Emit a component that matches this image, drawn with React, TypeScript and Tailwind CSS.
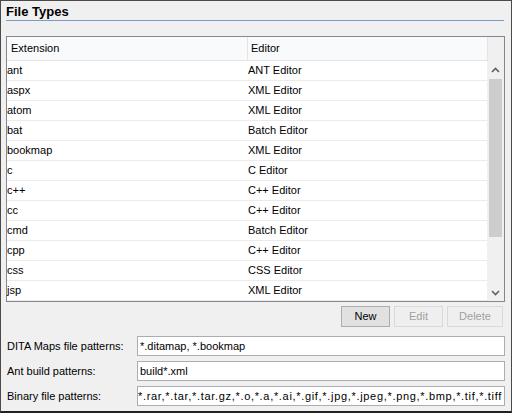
import React from 'react';

const rows: [string, string][] = [
  ['ant', 'ANT Editor'],
  ['aspx', 'XML Editor'],
  ['atom', 'XML Editor'],
  ['bat', 'Batch Editor'],
  ['bookmap', 'XML Editor'],
  ['c', 'C Editor'],
  ['c++', 'C++ Editor'],
  ['cc', 'C++ Editor'],
  ['cmd', 'Batch Editor'],
  ['cpp', 'C++ Editor'],
  ['css', 'CSS Editor'],
  ['jsp', 'XML Editor'],
];

const fields: [string, string][] = [
  ['DITA Maps file patterns:', '*.ditamap, *.bookmap'],
  ['Ant build patterns:', 'build*.xml'],
  ['Binary file patterns:', '*.rar,*.tar,*.tar.gz,*.o,*.a,*.ai,*.gif,*.jpg,*.jpeg,*.png,*.bmp,*.tif,*.tiff'],
];

const Chevron = ({ up }: { up?: boolean }) => (
  <svg width="9" height="6" viewBox="0 0 9 6" className="block">
    <path
      d={up ? 'M1 5 L4.5 1.5 L8 5' : 'M1 1 L4.5 4.5 L8 1'}
      fill="none"
      stroke="#606060"
      strokeWidth="1.6"
    />
  </svg>
);

export default function App() {
  return (
    <div
      className="w-[512px] h-[413px] bg-[#f0f0f0] border border-[#4a4a4a] border-b-2 border-b-[#222] text-[11px] text-black overflow-hidden"
      style={{ fontFamily: '"Liberation Sans", Arial, sans-serif' }}
    >
      {/* section title */}
      <div className="pl-[5px] pr-[7px] pt-[3px]">
        <div className="font-bold text-[13px] leading-[16px] h-[16px]">File Types</div>
        <div className="h-px bg-[#7a9cc6]" />
      </div>

      {/* table */}
      <div className="ml-[5px] mt-[15px] w-[499px] h-[266px] border border-[#828790] bg-white flex flex-col">
        <div className="flex h-[24px] shrink-0">
          <div className="flex flex-1 bg-[#f9fafc] border-b border-[#e5e5e5]">
            <div className="w-[241px] pl-[4px] flex items-center border-r border-[#e5e5e5]">Extension</div>
            <div className="flex-1 pl-[3px] flex items-center">Editor</div>
          </div>
          <div className="w-[17px] bg-[#f0f0f0] border-l border-[#e5e5e5]" />
        </div>
        <div className="flex flex-1 min-h-0">
          <div className="flex-1 flex flex-col">
            {rows.map(([ext, ed]) => (
              <div key={ext} className="flex h-[20px] shrink-0 border-b border-[#ebebeb] leading-[19px]">
                <div className="w-[241px]">{ext}</div>
                <div className="flex-1">{ed}</div>
              </div>
            ))}
          </div>
          <div className="w-[17px] bg-[#f0f0f0] flex flex-col items-center">
            <div className="h-[17px] flex items-center justify-center">
              <Chevron up />
            </div>
            <div className="mt-[1px] w-[13px] h-[158px] bg-[#cdcdcd]" />
            <div className="flex-1" />
            <div className="h-[17px] flex items-center justify-center">
              <Chevron />
            </div>
          </div>
        </div>
      </div>

      {/* buttons */}
      <div className="flex justify-end gap-[4px] pr-[8px] mt-[4px]">
        <button className="w-[49px] h-[21px] border border-[#adadad] bg-[#e1e1e1] text-black leading-none">New</button>
        <button className="w-[49px] h-[21px] border border-[#d9d9d9] bg-[#efefef] text-[#a0a0a0] leading-none">Edit</button>
        <button className="w-[56px] h-[21px] border border-[#d9d9d9] bg-[#efefef] text-[#a0a0a0] leading-none">Delete</button>
      </div>

      {/* patterns */}
      <div className="mt-[9px] flex flex-col gap-[5px] pl-[6px] pr-[6px]">
        {fields.map(([label, value], i) => (
          <div key={label} className="flex items-center h-[20px]">
            <div className="w-[130px] shrink-0">{label}</div>
            <div
              className={`flex-1 h-[20px] border border-[#abadb3] bg-white px-[2px] leading-[18px] whitespace-nowrap overflow-hidden flex ${
                i === 2 ? 'justify-end tracking-[0.68px]' : ''
              }`}
            >
              <span className="shrink-0">{value}</span>
            </div>
          </div>
        ))}
      </div>
    </div>
  );
}
